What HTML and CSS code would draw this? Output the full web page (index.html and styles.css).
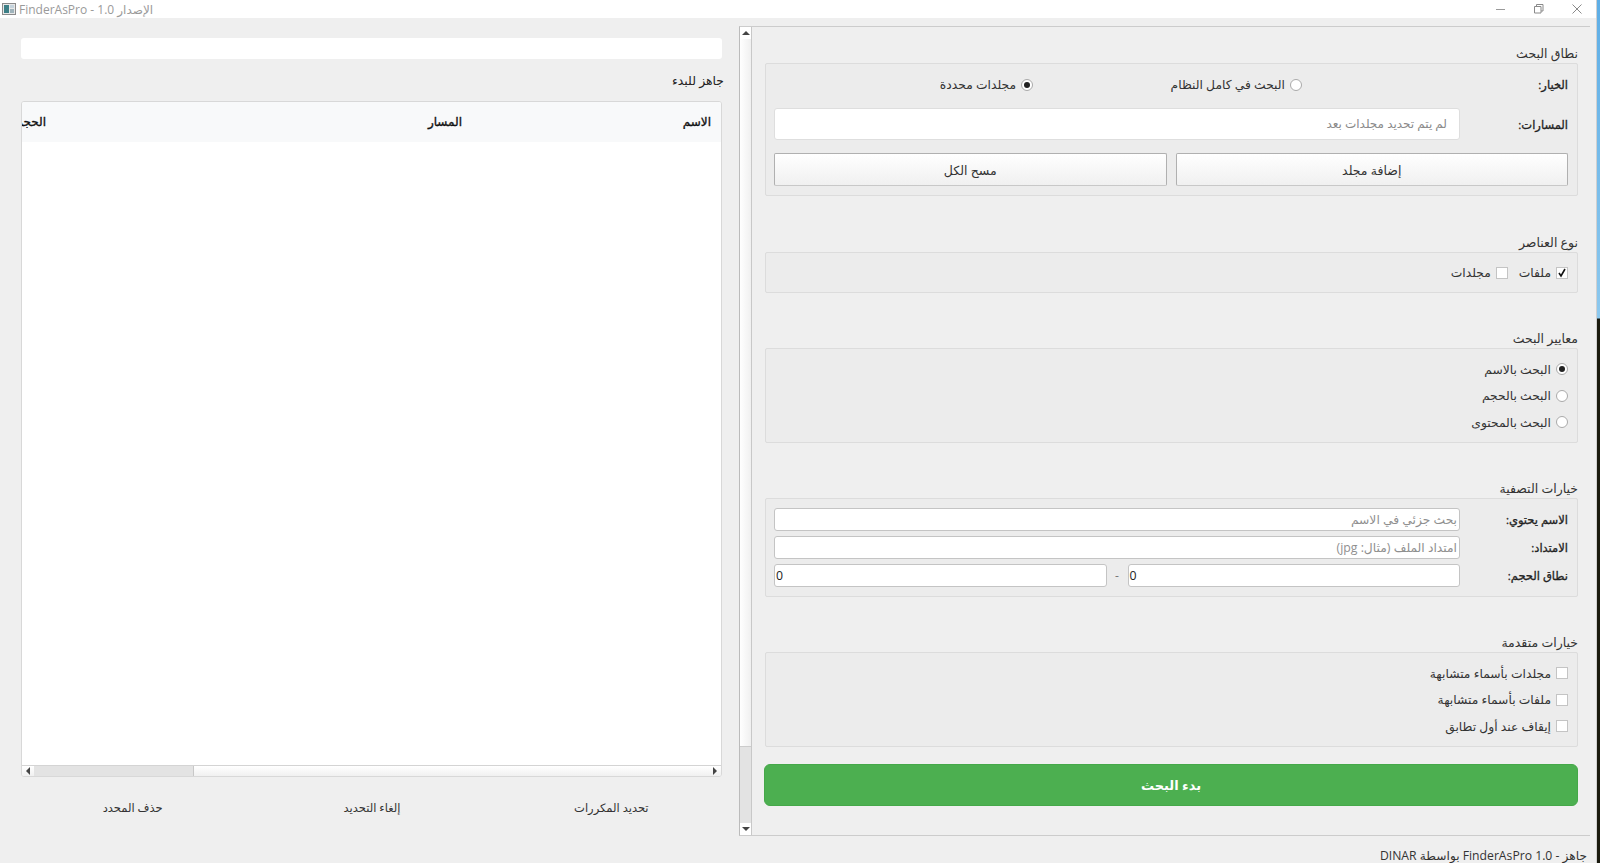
FILE: index.html
```html
<!DOCTYPE html>
<html lang="ar">
<head>
<meta charset="utf-8">
<title>FinderAsPro</title>
<link rel="stylesheet" href="styles.css">
</head>
<body>
<div class="window">
  <header class="titlebar">
    <div class="title-left">
      <svg class="app-icon" width="14" height="14" viewBox="0 0 14 14"><rect x="0.5" y="1.5" width="13" height="11" fill="#e8e8e8" stroke="#8a8a8a"/><rect x="2" y="3" width="5" height="8" fill="#3d7f86"/><rect x="8" y="3" width="4" height="3" fill="#c5d3dc"/><rect x="8" y="7" width="4" height="4" fill="#9fb3bb"/></svg>
      <span class="title-text" dir="rtl">الإصدار 1.0 - FinderAsPro</span>
    </div>
    <div class="win-controls">
      <svg width="12" height="12" viewBox="0 0 12 12"><path d="M1 6.5h9" stroke="#9a9a9a" fill="none"/></svg>
      <svg width="12" height="12" viewBox="0 0 12 12"><path d="M1.5 3.5h6.5v6.5h-6.5zM3.5 3.5v-2h6.5v6.5h-2" stroke="#8a8a8a" fill="none"/></svg>
      <svg width="12" height="12" viewBox="0 0 12 12"><path d="M1.5 1.5l9 9M10.5 1.5l-9 9" stroke="#8a8a8a" fill="none"/></svg>
    </div>
  </header>
  <div class="content">
    <section class="left">
      <div class="progress"></div>
      <div class="ready" dir="rtl">جاهز للبدء</div>
      <div class="table">
        <div class="thead">
          <div class="th th-size" dir="rtl"><span>الحجم</span></div>
          <div class="th th-path" dir="rtl">المسار</div>
          <div class="th th-name" dir="rtl">الاسم</div>
        </div>
        <div class="tbody"></div>
        <div class="hscroll">
          <div class="sb-btn"><svg width="6" height="8" viewBox="0 0 6 8"><path d="M5 0v8L1 4z" fill="#444"/></svg></div>
          <div class="hs-thumb"></div>
          <div class="hs-rest"></div>
          <div class="sb-btn"><svg width="6" height="8" viewBox="0 0 6 8"><path d="M1 0v8l4-4z" fill="#444"/></svg></div>
        </div>
      </div>
      <div class="actions">
        <div class="action" dir="rtl">حذف المحدد</div>
        <div class="action" dir="rtl">إلغاء التحديد</div>
        <div class="action" dir="rtl">تحديد المكررات</div>
      </div>
    </section>
    <section class="right">
      <div class="scrollarea">
        <div class="vscroll">
          <div class="sb-btn-v"><svg width="8" height="6" viewBox="0 0 8 6"><path d="M0 5h8L4 1z" fill="#444"/></svg></div>
          <div class="vs-thumb"></div>
          <div class="vs-rest"></div>
          <div class="sb-btn-v"><svg width="8" height="6" viewBox="0 0 8 6"><path d="M0 1h8L4 5z" fill="#444"/></svg></div>
        </div>
        <div class="panel" dir="rtl">
          <div class="group g1">
            <div class="g-title">نطاق البحث</div>
            <div class="g-box box1">
              <div class="row-choice">
                <div class="f-label">الخيار:</div>
                <div class="choice-cell first"><label class="opt"><span class="radio"></span>البحث في كامل النظام</label></div>
                <div class="choice-cell last"><label class="opt"><span class="radio on"></span>مجلدات محددة</label></div>
              </div>
              <div class="row-paths">
                <div class="f-label">المسارات:</div>
                <div class="path-field">لم يتم تحديد مجلدات بعد</div>
              </div>
              <div class="row-btns">
                <div class="btn">إضافة مجلد</div>
                <div class="btn">مسح الكل</div>
              </div>
            </div>
          </div>
          <div class="group g2">
            <div class="g-title">نوع العناصر</div>
            <div class="g-box box2">
              <label class="opt"><span class="check on"><svg width="10" height="10" viewBox="0 0 10 10"><path d="M2 5l2 3 4-7" stroke="#111" stroke-width="1.6" fill="none"/></svg></span>ملفات</label>
              <label class="opt"><span class="check"></span>مجلدات</label>
            </div>
          </div>
          <div class="group g3">
            <div class="g-title">معايير البحث</div>
            <div class="g-box box-list">
              <label class="opt"><span class="radio on"></span>البحث بالاسم</label>
              <label class="opt"><span class="radio"></span>البحث بالحجم</label>
              <label class="opt"><span class="radio"></span>البحث بالمحتوى</label>
            </div>
          </div>
          <div class="group g4">
            <div class="g-title">خيارات التصفية</div>
            <div class="g-box box4">
              <div class="row-filter">
                <div class="f-label">الاسم يحتوي:</div>
                <div class="field ph">بحث جزئي في الاسم</div>
              </div>
              <div class="row-filter">
                <div class="f-label">الامتداد:</div>
                <div class="field ph">امتداد الملف (مثال: jpg)</div>
              </div>
              <div class="row-filter">
                <div class="f-label">نطاق الحجم:</div>
                <div class="range">
                  <div class="field num" dir="ltr">0</div>
                  <span class="dash">-</span>
                  <div class="field num" dir="ltr">0</div>
                </div>
              </div>
            </div>
          </div>
          <div class="group g5">
            <div class="g-title">خيارات متقدمة</div>
            <div class="g-box box-list">
              <label class="opt"><span class="check"></span>مجلدات بأسماء متشابهة</label>
              <label class="opt"><span class="check"></span>ملفات بأسماء متشابهة</label>
              <label class="opt"><span class="check"></span>إيقاف عند أول تطابق</label>
            </div>
          </div>
          <div class="start">بدء البحث</div>
        </div>
      </div>
      <div class="status" dir="rtl">جاهز - FinderAsPro 1.0 بواسطة DINAR</div>
    </section>
  </div>
</div>
</body>
</html>
```
FILE: styles.css
```css
* { box-sizing: border-box; }
html, body { margin: 0; height: 100%; overflow: hidden; }
body { background: linear-gradient(#5eaee6 0, #8cc8ee 318px, #1a1a0e 319px); font-family: "Open Sans", "DejaVu Sans", sans-serif; font-size: 12px; color: #222; }
.window { width: 1597px; height: 863px; background: #efefef; display: flex; flex-direction: column; border-right: 1px solid #d0d0d0; }
.titlebar { height: 18px; background: #fff; display: flex; justify-content: space-between; align-items: center; }
.title-left { display: flex; align-items: center; gap: 3px; padding-left: 2px; }
.title-text { color: #9a9a9a; font-size: 12px; }
.win-controls { display: flex; gap: 26px; padding-right: 13px; }
.content { flex: 1; display: flex; min-height: 0; }
.left { flex: none; width: 739px; padding: 20px 16px 0 21px; display: flex; flex-direction: column; }
.progress { height: 21px; background: #fff; border-radius: 3px; margin-right: 1px; }
.ready { height: 42px; line-height: 44px; font-size: 12.4px; text-align: right; color: #222; margin-right: -1px; }
.table { height: 676px; background: #fff; border: 1px solid #d8d8d8; border-radius: 3px; display: flex; flex-direction: column; margin-right: 1px; overflow: hidden; }
.thead { height: 40px; background: #f8f9fa; display: flex; line-height: 40px; color: #111; }
.th { font-size: 12px; -webkit-text-stroke: 0.35px #111; }
.th-size { width: 24px; overflow: hidden; }
.th-size span { display: block; }
.th-path { width: 416px; text-align: right; }
.th-name { flex: 1; text-align: right; padding-right: 10px; }
.tbody { flex: 1; }
.hscroll { height: 11px; display: flex; border-top: 1px solid #d4d4d4; background: linear-gradient(#fff, #f0f0f0); }
.sb-btn { width: 12px; display: flex; align-items: center; justify-content: center; }
.hs-thumb { width: 160px; background: #e3e3e3; border-right: 1px solid #c8c8c8; }
.hs-rest { flex: 1; }
.actions { display: flex; height: 60px; align-items: center; margin: 0 -8px; }
.action { flex: 1; text-align: center; font-size: 11.5px; color: #333; }
.right { flex: 1; display: flex; flex-direction: column; min-width: 0; padding-right: 6px; }
.scrollarea { margin-top: 8px; height: 810px; display: flex; border-top: 1px solid #ccc; border-left: 1px solid #bbb; border-bottom: 1px solid #ccc; }
.vscroll { flex: none; width: 12px; display: flex; flex-direction: column; background: #e3e3e3; border-right: 1px solid #c8c8c8; }
.sb-btn-v { height: 12px; background: #fff; display: flex; align-items: center; justify-content: center; }
.vs-thumb { height: 708px; background: linear-gradient(90deg, #fff, #f0f0f0); border-bottom: 1px solid #ccc; }
.vs-rest { flex: 1; }
.panel { flex: 1; min-width: 0; padding: 0 12px 0 13px; display: flex; flex-direction: column; }
.group { display: flex; flex-direction: column; }
.g-title { font-size: 12.5px; color: #333; height: 16px; line-height: 14px; }
.g-box { background: #ececec; border: 1px solid #dcdcdc; border-radius: 2px; }
.g1 { margin-top: 20px; }
.g2 { margin-top: 40px; }
.g3 { margin-top: 39px; }
.g4 { margin-top: 39px; }
.g5 { margin-top: 39px; }
.box1 { height: 133px; padding: 0 9px 0 8px; display: flex; flex-direction: column; }
.f-label { width: 108px; font-size: 11.5px; color: #222; flex: none; -webkit-text-stroke: 0.3px #222; }
.row-choice { height: 42px; padding-bottom: 1px; display: flex; align-items: center; }
.choice-cell { display: flex; }
.choice-cell.first { width: 269px; margin-right: 158px; flex: none; }
.choice-cell.last { flex: 1; min-width: 0; }
.row-paths { height: 36px; display: flex; align-items: center; }
.path-field { flex: 1; height: 32px; line-height: 30px; background: #fff; border: 1px solid #dedede; border-radius: 3px; padding: 0 12px; color: #8a8a8a; font-size: 12px; }
.row-btns { display: flex; gap: 9px; margin-top: 11px; }
.btn { flex: 1; height: 33px; line-height: 33px; text-align: center; font-size: 12.5px; color: #333; border: 1px solid #b0b0b0; border-bottom-color: #c8c8c8; border-radius: 2px; background: linear-gradient(#ffffff, #f0f0f0); }
.opt { display: flex; align-items: center; gap: 5px; font-size: 12.3px; color: #333; }
.radio { width: 12px; height: 12px; border-radius: 50%; border: 1px solid #aaa; background: #fff; position: relative; flex: none; }
.radio.on::after { content: ""; position: absolute; inset: 2px; border-radius: 50%; background: #222; }
.check { width: 12px; height: 12px; border: 1px solid #c4c4c4; background: #fff; flex: none; display: flex; align-items: center; justify-content: center; }
.box2 { height: 41px; padding: 0 9px; display: flex; align-items: center; gap: 11px; }
.box-list { height: 95px; padding: 7px 9px; display: flex; flex-direction: column; justify-content: space-between; align-items: flex-start; }
.box-list .opt { height: 26px; }
.box4 { height: 99px; padding: 9px 9px 0 8px; display: flex; flex-direction: column; gap: 5px; }
.row-filter { display: flex; align-items: center; height: 23px; }
.field { flex: 1; min-width: 0; height: 23px; line-height: 21px; background: #fff; border: 1px solid #c4c4c4; border-radius: 3px; padding: 0 2px; font-size: 12.3px; }
.field.ph { color: #8f8f8f; }
.range { flex: 1; min-width: 0; display: flex; align-items: center; }
.dash { width: 21px; text-align: center; color: #777; }
.field.num { color: #222; padding: 0 1px; }
.start { margin-top: 17px; margin-left: -1px; height: 42px; line-height: 40px; background: #4caf50; border: 1px solid #45a849; border-radius: 6px; color: #fff; font-weight: bold; text-align: center; font-size: 13px; }
.status { height: 27px; line-height: 39px; padding-right: 3px; font-size: 12.2px; color: #333; }
```
